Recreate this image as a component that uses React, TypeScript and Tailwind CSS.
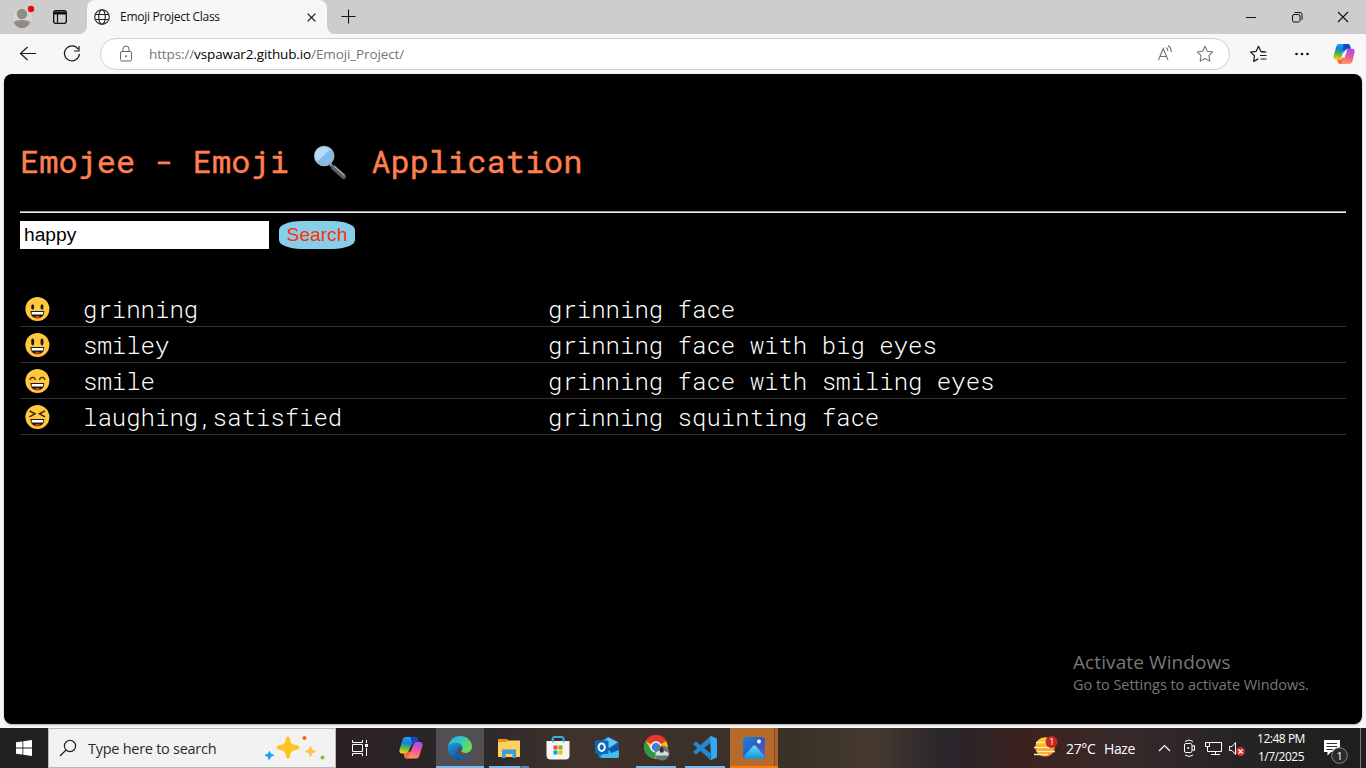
import React from "react";

const S = ({ w, h, vb, children, className = "" }: { w: number; h: number; vb?: string; children: React.ReactNode; className?: string }) => (
  <svg width={w} height={h} viewBox={vb ?? `0 0 ${w} ${h}`} fill="none" className={`block shrink-0 ${className}`}>
    {children}
  </svg>
);

const STAR = "M10 1.8l2.5 5.2 5.7.8-4.1 4 1 5.7-5.1-2.7-5.1 2.7 1-5.7-4.1-4 5.7-.8z";

const Copilot = ({ size, id }: { size: number; id: string }) => (
  <S w={size} h={size} vb="0 0 24 24">
    <defs>
      <linearGradient id={`${id}a`} x1=".6" y1="0" x2=".4" y2="1">
        <stop stopColor="#1aa5f5" />
        <stop offset=".35" stopColor="#1680dc" />
        <stop offset=".65" stopColor="#4cb84c" />
        <stop offset="1" stopColor="#f8cf10" />
      </linearGradient>
      <linearGradient id={`${id}b`} x1=".6" y1="0" x2=".4" y2="1">
        <stop stopColor="#a44df0" />
        <stop offset=".5" stopColor="#f0569a" />
        <stop offset="1" stopColor="#ffa052" />
      </linearGradient>
    </defs>
    <path d="M7 1.2h9c1.6 0 2.3 1 2.7 2.3l.8 2.8h-3.2c-1.9 0-2.800 1-3.400 2.800L10.500 11 9.200 15.800c-.6 1.700-1.500 2.500-3.300 2.500H3.200C.9 18.300 0 16.600.5 14.300L3.600 3.900C4.200 2.100 5.200 1.200 7 1.200z" fill={`url(#${id}a)`} />
    <path d="M11.500 1.200H16c1.600 0 2.300 1 2.700 2.300l.8 2.800h-3.800c-1.500 0-2.300.6-2.900 1.700l-2-1z" fill="#1746c2" />
    <path d="M17 22.800H8c-1.600 0-2.300-1-2.700-2.300l-.8-2.200h2.400c1.900 0 2.800-1 3.400-2.800L12.500 8.800h2.700c-.9 0-1.200.7-1.500 1.700l.9-2.200c.6-1.300 1.500-2 3.300-2h2.900c2.300 0 3.200 1.700 2.700 4l-2.400 9.800c-.6 1.800-1.600 2.700-4.100 2.700z" fill={`url(#${id}b)`} />
    <path d="M12.800 8.600h2.400L12.600 16h-3z" fill="#f7f7f7" />
    <path d="M4.500 18.300h2.400c1.900 0 2.800-1 3.400-2.800l-.6 7.300H8c-1.600 0-2.300-1-2.700-2.300z" fill="#ff6a3c" />
  </S>
);

const Face = ({ kind }: { kind: number }) => (
  <S w={26} h={26}>
    <circle cx="13.400" cy="13" r="12" fill="#ffc83d" />
    {kind === 0 && <g fill="#1c1a17"><ellipse cx="8.700" cy="11" rx="1.500" ry="2.700" /><ellipse cx="18" cy="11" rx="1.500" ry="2.700" /></g>}
    {kind === 1 && <g fill="#1c1a17"><ellipse cx="8.700" cy="10" rx="1.500" ry="3.400" /><ellipse cx="18" cy="10" rx="1.500" ry="3.400" /></g>}
    {kind === 2 && <path d="M6 12c.5-3.500 4.800-3.500 5.300 0M15.500 12c.5-3.500 4.800-3.500 5.300 0" stroke="#3b2b10" strokeWidth="1.300" />}
    {kind === 3 && <path d="M5.500 6.800l5.500 3-5.500 3M21 6.800l-5.500 3 5.500 3" stroke="#2b2110" strokeWidth="1.400" />}
    <path d="M6.500 15h13.800c0 5-2.900 7.300-6.900 7.300S6.500 20 6.500 15z" fill="#1c1a17" />
    <path d="M7.700 16h11.500v1.500c0 .8-.4 1.100-1 1.100H8.700c-.6 0-1-.3-1-1.100z" fill="#fff" />
    <path d="M10.700 21.500c1-2.300 4.500-2.300 5.500 0-1.700.9-3.800.9-5.500 0z" fill="#e8331c" />
  </S>
);

const results = [
  { alias: "grinning", text: "grinning face" },
  { alias: "smiley", text: "grinning face with big eyes" },
  { alias: "smile", text: "grinning face with smiling eyes" },
  { alias: "laughing,satisfied", text: "grinning squinting face" },
];

const TabBar = () => (
  <div className="flex h-[34px] bg-[#cdcdcd]">
    <div className="flex w-[87px] items-center">
      <S w={87} h={34}>
        <circle cx="22.500" cy="17" r="10.500" fill="#d6d3cf" stroke="#c2bfbb" strokeWidth=".6" />
        <circle cx="22" cy="14" r="5.200" fill="#8f8b87" />
        <path d="M14 22c2-2.700 14-2.700 16 0-1 4-4.500 6-8 6s-7-2-8-6z" fill="#8f8b87" />
        <circle cx="31" cy="9" r="3.200" fill="#e30b13" />
        <rect x="53.700" y="10.700" width="12.600" height="12.600" rx="2" stroke="#111" strokeWidth="1.300" />
        <path d="M54 11.500h12v3H54z" fill="#111" />
        <path d="M57.500 14v9" stroke="#111" strokeWidth="1.200" />
        <path d="M79 34a8 8 0 0 0 8-8v8z" fill="#f7f7f7" />
      </S>
    </div>
    <div className="flex w-[240px] items-center rounded-t-[8px] bg-[#f7f7f7] pl-[7px]">
      <S w={16} h={16}>
        <circle cx="8" cy="8" r="7.300" stroke="#222" strokeWidth="1.100" />
        <ellipse cx="8" cy="8" rx="3.300" ry="7.300" stroke="#222" strokeWidth="1.100" />
        <path d="M1.500 5.500h13M1.500 10.500h13" stroke="#222" strokeWidth="1.100" />
      </S>
      <span className="ml-[10px] w-[187px] text-[12px] tracking-[-0.28px] whitespace-nowrap text-[#111]">Emoji Project Class</span>
      <S w={9} h={9} className="mt-[1px]"><path d="M.6.6l7.800 7.800M8.400.6L.6 8.400" stroke="#111" strokeWidth="1.200" /></S>
    </div>
    <S w={40} h={34}>
      <path d="M0 26a8 8 0 0 0 8 8H0z" fill="#f7f7f7" />
      <path d="M14.500 16.500h14M21.500 9.500v14" stroke="#111" strokeWidth="1.100" />
    </S>
    <div className="flex-1" />
    <S w={138} h={34}>
      <path d="M18 17.500h10" stroke="#111" />
      <rect x="64.500" y="14.500" width="7.500" height="7.500" rx="1.500" stroke="#111" />
      <path d="M66.500 12.500h5.500a2 2 0 0 1 2 2v5.500" stroke="#111" />
      <path d="M110 12l10 10M120 12l-10 10" stroke="#111" strokeWidth="1.100" />
    </S>
  </div>
);

const AddressBar = () => (
  <div className="flex h-[40px] items-center bg-[#f7f7f7]">
    <S w={100} h={40}>
      <path d="M20.500 19.500h15.500M27.500 13l-7 6.500 7 6.500" stroke="#1b1b1b" strokeWidth="1.200" />
      <path d="M78.200 15.200a7.500 7.500 0 1 0 1.200 4.800M79 12v5h-5" stroke="#1b1b1b" strokeWidth="1.200" />
    </S>
    <div className="flex h-[32px] w-[1130px] items-center rounded-full border border-[#d0d0d0] bg-white">
      <S w={48} h={30}>
        <rect x="19.500" y="12.500" width="11" height="9.500" rx="1.500" stroke="#666" />
        <path d="M22 12.500v-2.500a3 3 0 0 1 6 0V12.500" stroke="#666" />
        <circle cx="25" cy="17.200" r="1" fill="#666" />
      </S>
      <span className="text-[13.5px] tracking-[-0.12px] whitespace-nowrap text-[#767676]">
        https://<span className="text-black">vspawar2.github.io</span>/Emoji_Project/
      </span>
      <div className="flex-1" />
      <S w={80} h={30}>
        <path d="M9.500 21l4.700-11.500L19 21M11 17.500h6.500M17 8.500c1.200.8 1.800 2 1.900 3.500M19 6.500c2.200 1.500 3.200 3.700 3.200 6.500" stroke="#717171" strokeWidth="1.100" />
        <path transform="translate(46.500 5.500) scale(.95)" d={STAR} stroke="#717171" strokeWidth="1.100" strokeLinejoin="round" />
      </S>
    </div>
    <S w={103} h={40}>
      <path d="M35 18l-4.200-.7L28.500 12.300l-2.300 5-5.700.8 4 3.700-.9 5.600 4.700-2.500" stroke="#1b1b1b" strokeWidth="1.200" strokeLinejoin="round" />
      <path d="M31.500 18h5M30 21.500h6.500M30.500 25h6" stroke="#1b1b1b" strokeWidth="1.200" />
      <circle cx="66.500" cy="20" r="1.300" fill="#111" /><circle cx="72" cy="20" r="1.300" fill="#111" /><circle cx="77.500" cy="20" r="1.300" fill="#111" />
    </S>
    <Copilot size={22} id="cpTop" />
  </div>
);

const Page = () => (
  <div className="relative h-[654px] bg-[#f7f7f7] px-[4px]">
    <main className="h-[650px] rounded-[8px] bg-black px-[16px] pt-[61px] font-['Roboto_Mono','Liberation_Mono',monospace] shadow-[0_1px_2px_rgba(0,0,0,0.3)]">
      <h1 className="flex h-[52px] items-center text-[32px] text-[coral] [-webkit-text-stroke:0.4px_coral]">
        <span className="whitespace-pre">{"Emojee - Emoji "}</span>
        <S w={44} h={36}>
          <path d="M22 21l4 4" stroke="#87939b" strokeWidth="3" />
          <path d="M25.500 24.500l10 9" stroke="#546069" strokeWidth="5" strokeLinecap="round" />
          <path d="M26.500 23.500l9.500 8.500" stroke="#a5afb5" strokeWidth="1.200" strokeLinecap="round" />
          <circle cx="16.200" cy="13" r="9.400" fill="#83bdf0" stroke="#a4aeb5" strokeWidth="1.800" />
          <path d="M9.200 18.500L22 6.500A8.500 8.500 0 0 0 9.200 18.500z" fill="#b5dcfa" />
        </S>
        <span className="whitespace-pre">{" Application"}</span>
      </h1>
      <div className="mt-[24px] h-[2px] border-t border-[#9a9a9a] bg-[#eee]" />
      <div className="mt-[8px] flex h-[28px] gap-[10px] font-['Liberation_Sans',sans-serif] text-[19.2px]">
        <input defaultValue="happy" className="w-[249px] rounded-none border-0 bg-white px-[4px] text-black outline-none" />
        <button className="w-[76px] rounded-[22px/9px] bg-[skyblue] text-[#ff3000]">Search</button>
      </div>
      <div className="mt-[42px] text-[24px] font-light text-white">
        {results.map((r, i) => (
          <div key={r.alias} className="flex h-[36px] items-center border-b border-[#333]">
            <div className="w-[63px] pt-[1px] pl-[4px]"><Face kind={i} /></div>
            <div className="w-[465px]">{r.alias}</div>
            <div className="whitespace-nowrap">{r.text}</div>
          </div>
        ))}
      </div>
    </main>
    <div className="absolute top-[576px] left-[1073px] whitespace-nowrap text-[#777]">
      <div className="h-[25px] text-[19px] leading-[25px] tracking-[0.1px]">Activate Windows</div>
      <div className="text-[14.5px] leading-[20px] tracking-[-0.05px]">Go to Settings to activate Windows.</div>
    </div>
  </div>
);

const Slot = ({ children, className = "" }: { children: React.ReactNode; className?: string }) => (
  <div className={`flex h-[40px] w-[48px] shrink-0 items-center justify-center ${className}`}>{children}</div>
);

const Taskbar = () => (
  <div className="flex h-[40px] bg-[linear-gradient(90deg,#202121_0%,#2c2122_25%,#29272a_34%,#40332c_42%,#3c3129_50%,#3a3126_58%,#463930_64%,#2a262b_69%,#2c2427_71%,#3c221f_75%,#37292a_82%,#272425_90%,#1d1e1e_100%)] text-white">
    <Slot>
      <S w={16} h={16}><path d="M0 2.300l6.500-.9v6.100H0zM7.300 1.300L16 0v7.500H7.300zM0 8.400h6.500v6.200L0 13.700zM7.300 8.400H16V16l-8.700-1.200z" fill="#fff" /></S>
    </Slot>
    <div className="flex w-[288px] items-center border border-[#b9b9b9] bg-[#f2f2f2]">
      <S w={39} h={38}>
        <circle cx="21" cy="17" r="5.600" stroke="#222" strokeWidth="1.200" />
        <path d="M17 21l-6 6" stroke="#222" strokeWidth="1.300" />
      </S>
      <span className="w-[176px] pt-[1px] text-[14.5px] tracking-[-0.27px] whitespace-nowrap text-[#2b2b2b]">Type here to search</span>
      <S w={70} h={38}>
        <path d="M24 7.500c1.200 0 1.800.8 2.300 3.500 .6 3.300 1.500 4 4.500 4.800 3.700.9 4.700 1.300 4.700 2.700s-1 1.800-4.700 2.700c-3 .8-3.900 1.500-4.500 4.800-.5 2.700-1.100 3.500-2.300 3.500s-1.800-.8-2.300-3.500c-.6-3.300-1.500-4-4.500-4.800-3.700-.9-4.700-1.300-4.700-2.700s1-1.800 4.700-2.700c3-.8 3.900-1.500 4.500-4.800.5-2.700 1.100-3.500 2.300-3.500z" fill="#ffc423" />
        <path d="M46.500 17c1 0 1.200 3.500 2 4 .8.600 3.500.500 3.500 1.500s-2.700 1-3.500 1.500c-.8.600-1 4-2 4s-1.200-3.400-2-4c-.8-.500-3.500-.500-3.500-1.500s2.700-.900 3.500-1.500c.8-.500 1-4 2-4z" fill="#ffc045" />
        <path d="M5.500 22.500l1.200 2.700 3 1-3 1.300-1.700 3-1-3-3-1.300 3-1z" fill="#12a5ee" stroke="#12a5ee" strokeLinejoin="round" />
        <circle cx="40.500" cy="9" r="2" fill="#f26522" /><circle cx="58.500" cy="28.500" r="2" fill="#7ac143" />
      </S>
    </div>
    <Slot>
      <S w={16} h={16}><path d="M.5 0v2.500h10V0M.5 16v-2.500h10V16M.5 4.500h10v7H.5zM14.500 0v3M14.500 8v8" stroke="#fff" /><path d="M13 4h3v3h-3z" fill="#fff" /></S>
    </Slot>
    <div className="ml-[3px] flex gap-[1px]">
      <Slot>
        <S w={24} h={24}>
          <defs>
            <linearGradient id="cl" x1=".6" y1="0" x2=".4" y2="1"><stop stopColor="#1aa5f5" /><stop offset=".4" stopColor="#1680dc" /><stop offset=".68" stopColor="#4cb84c" /><stop offset="1" stopColor="#f8cf10" /></linearGradient>
            <linearGradient id="cr" x1=".6" y1="0" x2=".4" y2="1"><stop stopColor="#a44df0" /><stop offset=".5" stopColor="#f0569a" /><stop offset="1" stopColor="#ffa052" /></linearGradient>
          </defs>
          <path d="M7 1h9c1.600 0 2.200 1 2.600 2.300l.8 2.700h-3.400c-1.600 0-2.400.8-3 2.600L9.500 15c-.6 1.700-1.500 2.500-3.300 2.500h-3C.9 17.500 0 16 .5 13.800L3.600 3.700C4.200 2 5.200 1 7 1z" fill="url(#cl)" />
          <path d="M11.500 1H16c1.600 0 2.200 1 2.600 2.300l.8 2.700H16c-1.600 0-2.400.8-3 2z" fill="#1746c2" />
          <path d="M17 22.500H8c-1.600 0-2.200-1-2.600-2.300l-.8-2.700h2.600c1.600 0 2.400-.8 3-2.600L14.500 8.500c.6-1.700 1.500-2.500 3.300-2.500h3c2.300 0 3.200 1.500 2.700 3.700l-3.100 10.100c-.6 1.700-1.600 2.700-3.400 2.700z" fill="url(#cr)" />
          <path d="M14.300 8.500H12.600L10 15.500h1.800z" fill="#302527" />
          <path d="M4.600 17.500h2.600c1.600 0 2.400-.8 3-2.600l-.6 7.600H8c-1.600 0-2.200-1-2.600-2.300z" fill="#ff6a3c" />
        </S>
      </Slot>
      <Slot className="border-b-2 border-[#76b9ed] bg-[#524e54] pt-[1px]">
        <S w={24} h={24}>
          <defs>
            <linearGradient id="eg" x1="0" y1="0" x2="1" y2=".5"><stop stopColor="#36b5e6" /><stop offset=".5" stopColor="#31c5c5" /><stop offset="1" stopColor="#6be050" /></linearGradient>
            <linearGradient id="eb" x1="0" y1="0" x2=".5" y2="1"><stop stopColor="#1f9ce4" /><stop offset="1" stopColor="#0b529f" /></linearGradient>
          </defs>
          <path d="M0 11C1 4.500 6 0 12 0c7 0 12 5 12 10.500 0 4-3 6.500-6.500 6.500-2.700 0-4-1-4-2 0-.8 1-1.200 1-3C14.500 9 11 7 8 7 4.500 7 1.500 8.500 0 11z" fill="url(#eg)" />
          <path d="M0 12c0-3 4-5 8-5 3.500 0 6.500 2.200 6.500 5-1-1-2.300-1-3-1-2.300 1-3 3-2.500 5.500.7 3.500 4 6 7.500 6-1.500 1-3 1.500-4.500 1.500C5 24 0 18.500 0 12z" fill="url(#eb)" />
          <path d="M8.800 13.500c-.8 5 4 8 8.400 7 2-.4 4-1.500 5-2.500.4-.3.800.1.500.5-2.200 3.300-5.700 4.800-8 4.600-5-.5-7.900-5.600-5.900-9.600z" fill="#1262ad" />
        </S>
      </Slot>
      <Slot className="relative">
        <S w={22} h={20}>
          <path d="M0 1h9l1.500 2H22v4H0z" fill="#dc9b0b" /><path d="M0 4h8l2-1.500h12V19H0z" fill="#ffd15c" />
          <path d="M4 11.500h14V20h-3.500v-4h-7v4H4z" fill="#3d9be0" />
        </S>
        <div className="absolute bottom-0 left-[4px] h-[2px] w-[40px] bg-[linear-gradient(90deg,#76b9ed_78%,#40657d_78%,#5588aa_82%)]" />
      </Slot>
      <Slot>
        <S w={24} h={24}>
          <path d="M6.500 5.500V3Q6.500 1 8.500 1h7Q17.500 1 17.500 3V5.500" stroke="#35aee2" strokeWidth="1.800" />
          <path d="M.5 5h23v14.500q0 4-4 4h-15q-4 0-4-4z" fill="#f5f5f5" />
          <path d="M7 3v3.500M17.500 3v3.500" stroke="#35aee2" strokeWidth="1.600" />
          <path d="M7.500 9.500h4v4h-4z" fill="#f25022" /><path d="M12.500 9.500h4v4h-4z" fill="#7fba00" /><path d="M7.500 14.500h4v4h-4z" fill="#00a4ef" /><path d="M12.500 14.500h4v4h-4z" fill="#ffb900" />
        </S>
      </Slot>
      <Slot>
        <S w={24} h={24}>
          <path d="M3 7l10-6.500L24 7v13q0 2-2 2H6q-3 0-3-3z" fill="#1671c9" /><path d="M7 6l6.500-4.500L23 6l-9 6z" fill="#63c7f2" /><path d="M24 8v12q0 2-2 2H7l-2-2z" fill="#44bde9" /><path d="M14 13l10-6v7l-8 3z" fill="#1257a6" />
          <rect y="4.500" width="13.500" height="13.500" rx="1.500" fill="#0f68be" /><ellipse cx="6.700" cy="11.300" rx="3.100" ry="3.700" stroke="#fff" strokeWidth="2" />
        </S>
      </Slot>
      <Slot className="relative">
        <S w={27} h={26}>
          <circle cx="13" cy="12" r="11.800" fill="#f8bd12" />
          <path d="M13 12L2.800 6A11.800 11.800 0 0 1 23.300 6z" fill="#e5392c" />
          <path d="M2.800 6A11.800 11.800 0 0 0 11.500 23.700L17 14l-9.300 1z" fill="#279b49" />
          <path d="M13 .2A11.800 11.800 0 0 1 23.300 6.500H13z" fill="#e5392c" />
          <circle cx="13" cy="12" r="5.700" fill="#fff" /><circle cx="13" cy="12" r="4.300" fill="#377fe4" />
          <circle cx="19" cy="18" r="7.500" fill="#707678" /><path d="M12.500 17.500l3-1.500h6l4 2v2.500H12.500z" fill="#d8e0df" /><path d="M17 13.500q1.500-3 3.500 0v4H17z" fill="#292f31" /><path d="M14 21.500h10v1.500H14z" fill="#4a817c" />
        </S>
        <div className="absolute bottom-0 left-[4px] h-[2px] w-[40px] bg-[#76b9ed]" />
      </Slot>
      <Slot className="relative">
        <S w={24} h={24}>
          <path d="M18 6.500L3 18.500 0 16 17 .5z" fill="#218bd0" /><path d="M0 8l3-2.500L18 17.500l-1 6z" fill="#218bd0" />
          <path d="M17 .3L18 0l6 2.500v19L18 24l-1-.5 1-2z" fill="#35a9ef" />
        </S>
        <div className="absolute bottom-0 left-[4px] h-[2px] w-[40px] bg-[#76b9ed]" />
      </Slot>
      <Slot className="relative border-b-2 border-[#ff7a00] bg-[linear-gradient(90deg,#b66a2b_0_91%,#85502a_91%_94%,#a9622b_94%)] pt-[2px]">
        <S w={22} h={22}>
          <defs>
            <linearGradient id="pb" x1="0" y1="0" x2="1" y2="1"><stop stopColor="#1785df" /><stop offset=".5" stopColor="#305bc2" /><stop offset="1" stopColor="#7451be" /></linearGradient>
            <linearGradient id="pm" x1="0" y1="0" x2="0" y2="1"><stop stopColor="#5bdcf7" /><stop offset="1" stopColor="#188fdc" /></linearGradient>
          </defs>
          <rect width="22" height="22" rx="3" fill="url(#pb)" />
          <path d="M1 19L10 9q1.500-1.500 3 0l8.500 10Q21.500 22 19 22H3q-2 0-2-3z" fill="url(#pm)" /><circle cx="16" cy="4.500" r="2" fill="#fff" />
        </S>
      </Slot>
    </div>
    <div className="flex-1" />
    <div className="flex w-[333px] items-center">
      <S w={25} h={26} className="-mt-[3px]">
        <defs><linearGradient id="sun" x1="0" y1="0" x2="0" y2="1"><stop stopColor="#ffcf26" /><stop offset="1" stopColor="#f58a1c" /></linearGradient></defs>
        <circle cx="12" cy="13" r="9.800" fill="url(#sun)" />
        <path d="M3 8.500h10M1 13.500h16M4 17.500h18M1 20.500h14" stroke="#ffe9b8" strokeWidth="1.500" />
        <circle cx="18.500" cy="8" r="6" fill="#c9281f" />
        <text x="16.200" y="11.300" fontSize="9" fill="#fff" fontFamily="Open Sans, sans-serif">1</text>
      </S>
      <span className="ml-[8px] w-[38px] text-[14px] tracking-[-0.35px] whitespace-nowrap">27°C</span>
      <span className="w-[54px] text-[14px] tracking-[-0.4px]">Haze</span>
      <S w={88} h={40}>
        <path d="M1 23l5.500-5.500L12 23" stroke="#fff" strokeWidth="1.200" />
        <rect x="26.500" y="15.500" width="7.500" height="9" rx="1.500" stroke="#fff" /><path d="M34 18.500l2.500-1v5L34 21.500M27 13.500q4-3 8 0M27 27q4 3 8 0" stroke="#fff" />
        <circle cx="30.200" cy="20" r="1" fill="#fff" />
        <path d="M51.500 14.500H63.500v9H49.500v-5M57.500 23.500v3M53 26.500h9M47.500 14.500h4v4h-4z" stroke="#fff" />
        <path d="M71.500 18.500h2.500l3.500-4v12l-3.500-4h-2.500z" stroke="#fff" /><circle cx="82.500" cy="23.500" r="4.500" fill="#d92c32" /><path d="M80.500 21.500l4 4M84.500 21.500l-4 4" stroke="#fff" strokeWidth="1.200" />
      </S>
      <div className="ml-[6px] flex w-[58px] flex-col items-center text-[12px] leading-[18px] tracking-[-0.48px] whitespace-nowrap"><span>12:48 PM</span><span>1/7/2025</span></div>
      <S w={55} h={40}>
        <path d="M14 12h16v12H21l-3.500 3.500V24H14z" fill="#fff" /><path d="M16.500 15.500H27M16.500 18.500H27M16.500 21.500H23" stroke="#333" />
        <circle cx="29.500" cy="27.500" r="7.800" fill="#2a2a2a" stroke="#888" /><text x="26.600" y="31.500" fontSize="11" fill="#fff" fontFamily="Open Sans, sans-serif">1</text>
        <path d="M50.500 0v40" stroke="#777" />
      </S>
    </div>
  </div>
);

export default function App() {
  return (
    <div className="h-[768px] w-[1366px] overflow-hidden font-['Open_Sans','Noto_Sans',sans-serif]">
      <TabBar />
      <AddressBar />
      <Page />
      <Taskbar />
    </div>
  );
}
